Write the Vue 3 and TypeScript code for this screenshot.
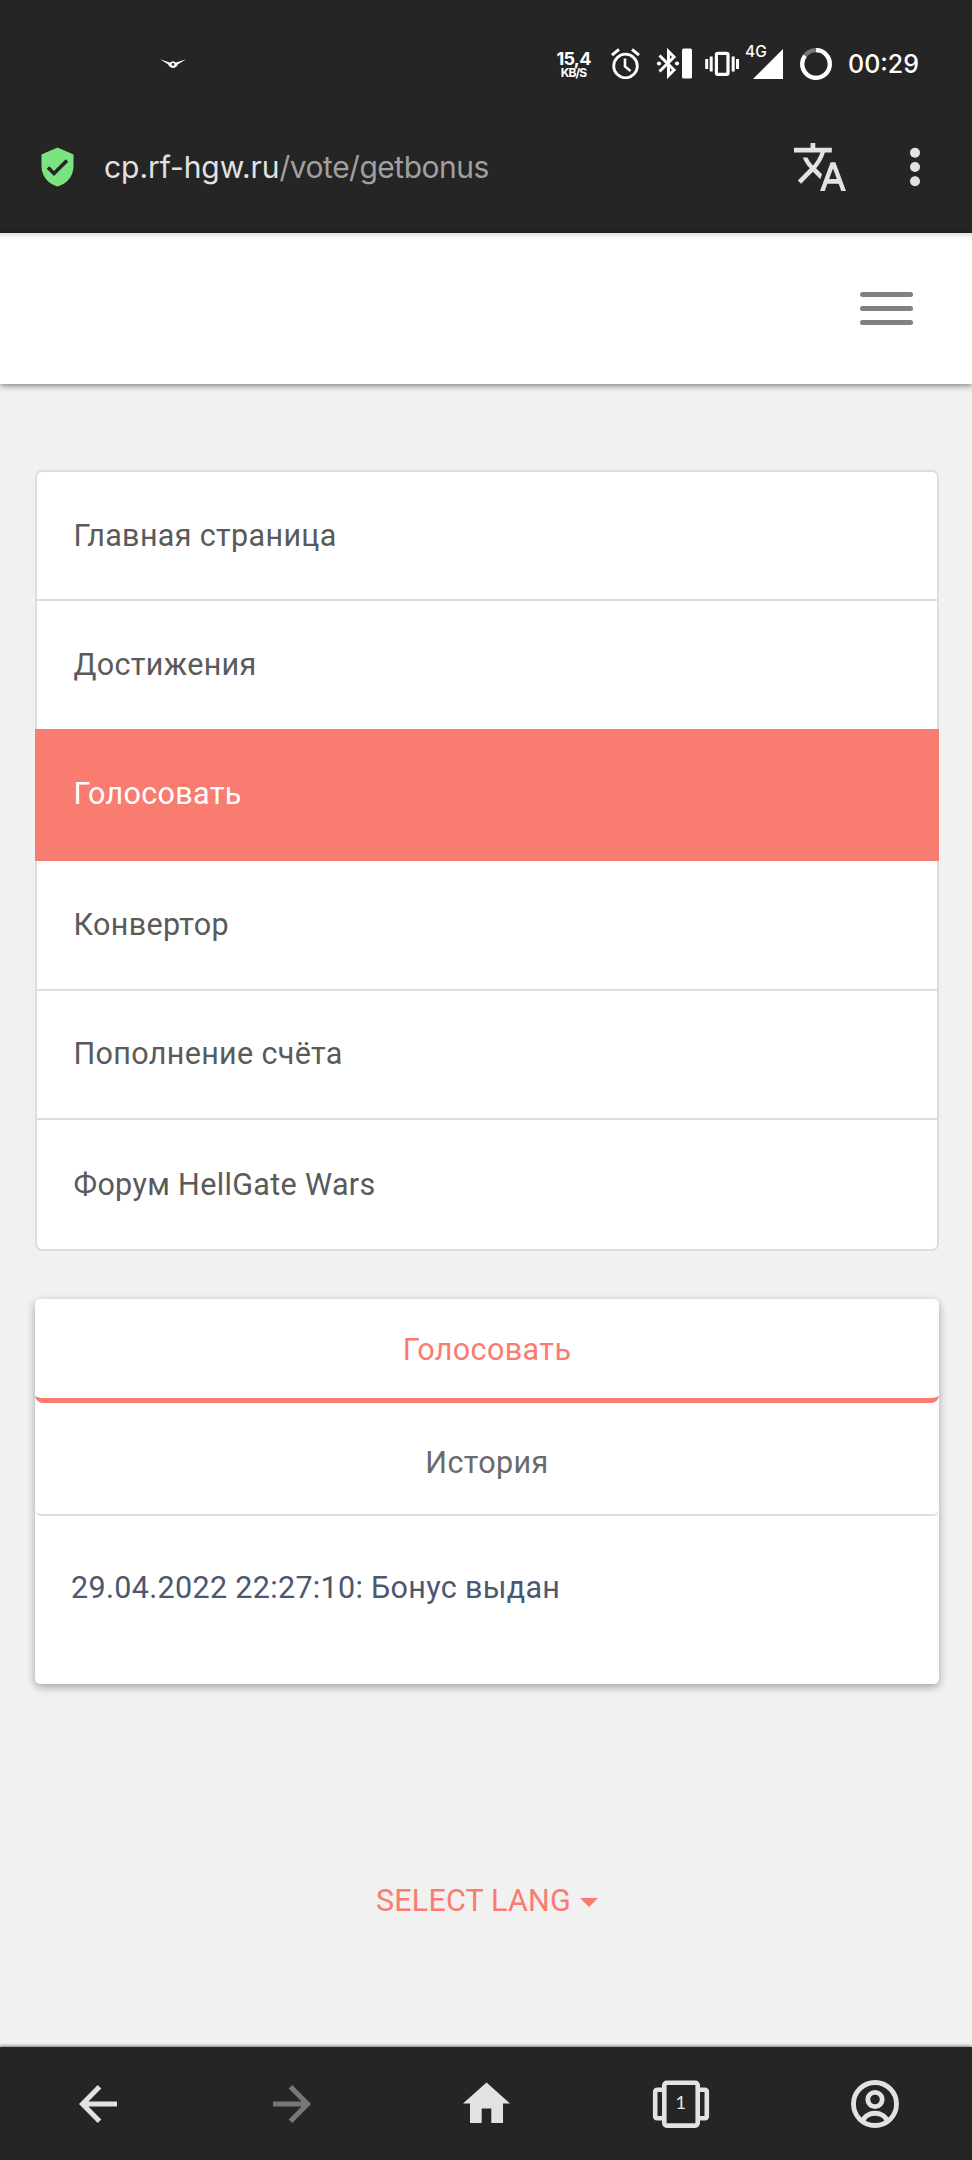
<script setup lang="ts">
interface MenuItem {
  label: string
  active?: boolean
}

const menu: MenuItem[] = [
  { label: 'Главная страница' },
  { label: 'Достижения' },
  { label: 'Голосовать', active: true },
  { label: 'Конвертор' },
  { label: 'Пополнение счёта' },
  { label: 'Форум HellGate Wars' },
]
</script>

<template>
  <div class="screen">
    <header class="chrome">
      <div class="status">
        <svg class="bird" width="26" height="10" viewBox="0 0 26 10">
          <path d="M0 0.3L9 3.2Q11 3.8 12 2.6Q13 1.9 14 2.6Q15 3.8 17 3.2L26 0.3L18 5.2Q16 9 13 9Q10 9 8 5.2Z" fill="#fff" />
          <circle cx="13" cy="5.4" r="1.3" fill="#252525" />
        </svg>
        <div class="speed"><b>15,4</b><span>KB/S</span></div>
        <svg class="alarm" width="29" height="31" viewBox="0 0 29 31">
          <g fill="none" stroke="#fff" stroke-width="2.8">
            <circle cx="14.5" cy="18" r="11.8" />
            <path d="M1 7.2L8 1.4M21 1.4l7 5.8" stroke-width="3" />
            <path d="M14 10.5v8l5.5 4.5" stroke-width="2.6" />
          </g>
        </svg>
        <svg class="bt" width="36" height="31" viewBox="0 0 36 31">
          <path d="M3.500 7.500L18 22L12.500 27.500V3.500L18 9L3.500 23.500" fill="none" stroke="#fff" stroke-width="3" />
          <circle cx="3" cy="15.5" r="2.100" fill="#fff" />
          <circle cx="21" cy="15.5" r="2.100" fill="#fff" />
          <rect x="26" y="0.5" width="10" height="30" rx="1.5" fill="#fff" />
        </svg>
        <svg class="vib" width="34" height="26" viewBox="0 0 34 26">
          <rect x="11.400" y="2.4" width="11.6" height="21" rx="1.4" fill="none" stroke="#fff" stroke-width="3.200" />
          <path d="M1.700 8v10M6.200 5.500v15M28.200 5.500v15M32.500 8v10" stroke="#fff" stroke-width="3" />
        </svg>
        <div class="signal">
          <span>4G</span>
          <svg width="30" height="30" viewBox="0 0 30 30"><path d="M30 0v30H0z" fill="#fff" /></svg>
        </div>
        <svg class="ring" width="32" height="32" viewBox="0 0 32 32">
          <circle cx="16" cy="16" r="13.8" fill="none" stroke="#777" stroke-width="4.2" />
          <path d="M16 2.2A13.8 13.8 0 1 1 5 7.7" fill="none" stroke="#fff" stroke-width="4.2" />
        </svg>
        <span class="time">00:29</span>
      </div>

      <div class="address">
        <svg class="shield" width="33" height="40" viewBox="0 0 33 40">
          <path d="M16.5 0.5L32.5 7.5V19C32.5 29.5 25.5 37 16.5 39.5C7.5 37 0.5 29.5 0.5 19V7.5Z" fill="#7be380" />
          <path d="M7 20.5l6 6L26 13.5" fill="none" stroke="#252525" stroke-width="3.6" />
        </svg>
        <div class="url"><span class="host">cp.rf-hgw.ru</span><span class="path">/vote/getbonus</span></div>
        <svg class="translate" width="52" height="48" viewBox="1 2 22 20" preserveAspectRatio="none">
          <path fill="#e2e2e2" d="M12.87 15.07l-2.54-2.51.03-.03c1.74-1.94 2.98-4.17 3.71-6.53H17V4h-7V2H8v2H1v1.99h11.17C11.5 7.92 10.44 9.75 9 11.35 8.07 10.32 7.3 9.19 6.69 8h-2c.73 1.63 1.73 3.17 2.98 4.56l-5.09 5.02L4 19l5-5 3.11 3.11.76-2.04zM18.5 10h-2L12 22h2l1.12-3h4.75L21 22h2l-4.5-12zm-2.62 7l1.62-4.33L19.12 17h-3.24z" />
        </svg>
        <svg class="dots" width="10" height="40" viewBox="0 0 10 40" fill="#e2e2e2">
          <circle cx="5" cy="5.8" r="5" /><circle cx="5" cy="20" r="5" /><circle cx="5" cy="34.2" r="5" />
        </svg>
      </div>
    </header>

    <nav class="navbar">
      <button class="burger" aria-label="Menu"><i></i><i></i><i></i></button>
    </nav>

    <main class="content">
      <ul class="menu">
        <li v-for="item in menu" :key="item.label" :class="{ active: item.active }">{{ item.label }}</li>
      </ul>

      <section class="card">
        <div class="tab current">Голосовать</div>
        <div class="tab history">История</div>
        <p class="record">29.04.2022 22:27:10: Бонус выдан</p>
      </section>

      <div class="lang"><span>SELECT LANG</span><i></i></div>
    </main>

    <footer class="bottom">
      <div>
        <svg width="38" height="38" viewBox="0 0 38 38" fill="none" stroke="#e2e2e2" stroke-width="5">
          <path d="M20.5 1.8L3.5 19l17 17.2M4 19h34" />
        </svg>
      </div>
      <div>
        <svg width="38" height="38" viewBox="0 0 38 38" fill="none" stroke="#777" stroke-width="5">
          <path d="M17.500 1.8L34.500 19l-17 17.2M34 19H0" />
        </svg>
      </div>
      <div>
        <svg class="home" width="47" height="41" viewBox="0 0 47 41">
          <path d="M23.500 0.500L47 21.500H40V41H28.300V26.500H18.700V41H7V21.500H0Z" fill="#e2e2e2" />
        </svg>
      </div>
      <div class="tabs">
        <svg width="58" height="48" viewBox="0 0 58 48" fill="none" stroke="#e2e2e2" stroke-width="4.600">
          <rect x="12.300" y="2.800" width="33.400" height="42.800" rx="2.500" />
          <path d="M11 9.700H5.500Q3.200 9.700 3.200 12V36Q3.200 38.300 5.500 38.300H11M47 9.700H52.500Q54.800 9.700 54.800 12V36Q54.800 38.300 52.500 38.300H47" />
        </svg>
        <span>1</span>
      </div>
      <div>
        <svg width="48" height="48" viewBox="0 0 48 48" fill="none" stroke="#e2e2e2" stroke-width="4.800">
          <circle cx="24" cy="24" r="21.500" />
          <circle cx="24" cy="19.500" r="7.200" />
          <path d="M11.500 41.500C15 30.500 33 30.500 36.500 41.500" />
        </svg>
      </div>
    </footer>
  </div>
</template>

<style>
body {
  margin: 0;
  background: #f1f1f1;
}
</style>

<style scoped>
.screen {
  display: flex;
  flex-direction: column;
  width: 972px;
  height: 2160px;
  overflow: hidden;
  background: #f1f1f1;
  font-family: Roboto, "Liberation Sans", sans-serif;
}
.screen * {
  box-sizing: border-box;
}
svg {
  display: block;
  flex: none;
}
.chrome {
  flex: none;
  height: 233px;
  background: #252525;
}
.status {
  display: flex;
  align-items: center;
  height: 127px;
  padding-left: 160px;
  color: #fff;
  font-family: Inter, sans-serif;
}
.speed {
  display: flex;
  flex-direction: column;
  align-items: center;
  width: 35px;
  margin-left: 370px;
  padding-top: 3px;
}
.speed b {
  font-size: 18px;
  line-height: 15px;
  font-weight: 700;
  letter-spacing: -0.7px;
}
.speed span {
  font-size: 12px;
  line-height: 13px;
  font-weight: 700;
  letter-spacing: -0.9px;
}
.alarm { margin-left: 20px; }
.bt { margin-left: 16px; }
.vib { margin-left: 13px; }
.signal {
  position: relative;
  margin-left: 14px;
}
.signal span {
  position: absolute;
  left: -8px;
  top: -6px;
  font-size: 15.5px;
  line-height: 18px;
  font-weight: 500;
}
.ring { margin-left: 17px; }
.time {
  margin-left: 16px;
  font-size: 25px;
  font-weight: 500;
  letter-spacing: 0;
}
.address {
  display: flex;
  align-items: center;
  height: 80px;
  padding-left: 41px;
}
.url {
  width: 401px;
  margin-left: 30px;
  font-family: Inter, sans-serif;
  font-size: 30px;
  white-space: nowrap;
}
.host {
  color: #e2e2e2;
  letter-spacing: -0.05px;
}
.path {
  color: #a0a0a0;
  letter-spacing: -0.5px;
}
.translate { margin-left: 289px; }
.dots { margin-left: 64px; }
.navbar {
  position: relative;
  flex: none;
  display: flex;
  justify-content: flex-end;
  align-items: center;
  height: 151px;
  padding-right: 59px;
  background: linear-gradient(#e4e2e4, #fff 6px);
  box-shadow: 0 2px 6px rgba(0, 0, 0, 0.45);
}
.burger {
  display: flex;
  flex-direction: column;
  gap: 9px;
  width: 53px;
  padding: 0;
  border: 0;
  background: none;
}
.burger i {
  height: 5px;
  border-radius: 2.5px;
  background: #808080;
}
.content {
  flex: 1;
  padding: 86px 33px 0 35px;
}
.menu {
  height: 781px;
  margin: 0;
  padding: 0;
  list-style: none;
  border: 2px solid #ddd;
  border-radius: 7px;
  background: #fff;
}
.menu li {
  display: flex;
  align-items: center;
  height: 129.67px;
  padding: 0 36.500px 1px;
  border-bottom: 2px solid #ddd;
  color: #5a5a5a;
  font-size: 30.5px;
  letter-spacing: 0.34px;
}
.menu li:first-child {
  height: 129px;
}
.menu li:last-child {
  border-bottom: 0;
}
.menu li.active {
  height: 132.340px;
  margin: -2px -2px 0;
  padding: 0 38.500px 2px;
  border: 0;
  background: #f97c70;
  color: #fff;
}
.card {
  height: 385px;
  margin-top: 48px;
  border-radius: 5px;
  background: #fff;
  box-shadow: 0 3px 8px rgba(0, 0, 0, 0.33);
}
.tab {
  display: flex;
  align-items: center;
  justify-content: center;
  border-radius: 6px;
  font-size: 30.5px;
}
.current {
  height: 104px;
  padding-top: 2px;
  border-bottom: 5px solid #f97c70;
  border-radius: 6px 6px 8px 8px;
  color: #f97c70;
}
.current,
.history {
  letter-spacing: 0.4px;
}
.history {
  height: 113px;
  padding-top: 8px;
  border-bottom: 2px solid #ddd;
  color: #6a6a6a;
}
.record {
  margin: 54px 0 0 36px;
  color: #4c5770;
  font-size: 30.5px;
  line-height: 36px;
  letter-spacing: 0.32px;
}
.lang {
  display: flex;
  align-items: center;
  justify-content: center;
  gap: 9px;
  margin-top: 199px;
  color: #f97c70;
  font-size: 30.5px;
  line-height: 36px;
  letter-spacing: 0.2px;
}
.lang i {
  border: 9px solid transparent;
  border-top-color: #f97c70;
  border-bottom: 0;
  margin-top: 2px;
}
.bottom {
  flex: none;
  display: grid;
  grid-template-columns: repeat(5, 1fr);
  height: 113px;
  padding-left: 1px;
  background: #252525;
  box-shadow: 0 -1px 3px rgba(0, 0, 0, 0.5);
}
.bottom > div {
  display: flex;
  align-items: center;
  justify-content: center;
  position: relative;
}
.home {
  margin-bottom: 3px;
}
.tabs span {
  position: absolute;
  color: #e2e2e2;
  font-family: Lato, sans-serif;
  font-size: 18px;
  line-height: 20px;
  top: 45px;
}
</style>
